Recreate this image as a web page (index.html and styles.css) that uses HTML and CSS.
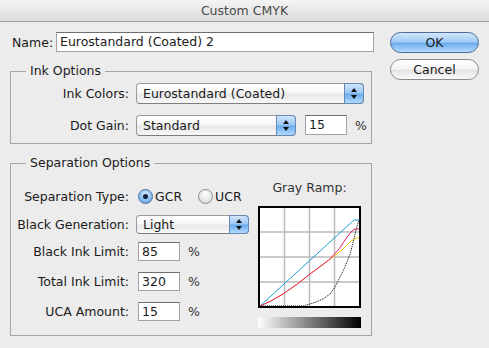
FILE: index.html
```html
<!DOCTYPE html>
<html lang="en">
<head>
<meta charset="utf-8">
<title>Custom CMYK</title>
<link rel="stylesheet" href="styles.css">
</head>
<body>
<div class="win">
  <div class="titlebar">Custom CMYK</div>
  <div class="content">
    <div class="main">
      <div class="name-row">
        <span class="name-lbl">Name:</span>
        <div class="field name-field">Eurostandard (Coated) 2</div>
      </div>

      <fieldset class="group ink">
        <legend>Ink Options</legend>
        <div class="row">
          <span class="lbl">Ink Colors:</span>
          <div class="popup popup-wide">Eurostandard (Coated)<span class="stepper"></span></div>
        </div>
        <div class="row">
          <span class="lbl">Dot Gain:</span>
          <div class="popup popup-mid">Standard<span class="stepper"></span></div>
          <div class="field num">15</div>
          <span class="pct">%</span>
        </div>
      </fieldset>

      <fieldset class="group sep">
        <legend>Separation Options</legend>
        <div class="sep-body">
          <div class="sep-rows">
            <div class="row">
              <span class="lbl">Separation Type:</span>
              <span class="radio on"></span><span class="radio-txt">GCR</span>
              <span class="radio"></span><span class="radio-txt">UCR</span>
            </div>
            <div class="row gen">
              <span class="lbl">Black Generation:</span>
              <div class="popup popup-short">Light<span class="stepper"></span></div>
            </div>
            <div class="row numrow">
              <span class="lbl">Black Ink Limit:</span>
              <div class="field num">85</div>
              <span class="pct">%</span>
            </div>
            <div class="row numrow">
              <span class="lbl">Total Ink Limit:</span>
              <div class="field num">320</div>
              <span class="pct">%</span>
            </div>
            <div class="row numrow">
              <span class="lbl">UCA Amount:</span>
              <div class="field num">15</div>
              <span class="pct">%</span>
            </div>
          </div>
          <div class="ramp">
            <div class="ramp-lbl">Gray Ramp:</div>
            <svg class="ramp-graph" width="103" height="102" viewBox="0 0 103 102">
              <rect x="0" y="0" width="103" height="102" fill="#fff"/>
              <g stroke="#b9b9b9" stroke-width="1.5">
                <line x1="26.5" y1="1" x2="26.5" y2="101"/>
                <line x1="51.5" y1="1" x2="51.5" y2="101"/>
                <line x1="76.5" y1="1" x2="76.5" y2="101"/>
                <line x1="1" y1="26" x2="102" y2="26"/>
                <line x1="1" y1="51" x2="102" y2="51"/>
                <line x1="1" y1="76" x2="102" y2="76"/>
              </g>
              <g fill="none" stroke-width="1">
                <polyline stroke="#1b9fd8" points="2,100 96,14 101,14"/>
                <polyline stroke="#f2c200" points="2,100 13,95 25,88 38,79 52,68 64,59 75,51 84,44 92,36 96,33 98,32 101,32"/>
                <polyline stroke="#e81c6e" points="2,100 13,95 25,88 38,79 52,68 63,60 72,53 81,43 89,31 94,25 97,23 101,23"/>
                <polyline stroke="#000" stroke-dasharray="1 1" points="1,100 45,100 52,98 58,96 65,93 72,88 77,81 82,71 87,61 92,48 95,37 98,24 101,14"/>
              </g>
              <rect x="1" y="1" width="101" height="100" fill="none" stroke="#000" stroke-width="2"/>
            </svg>
            <div class="ramp-bar"></div>
          </div>
        </div>
      </fieldset>
    </div>

    <div class="buttons">
      <div class="btn btn-default">OK</div>
      <div class="btn">Cancel</div>
    </div>
  </div>
</div>
</body>
</html>
```

FILE: styles.css
```css
*{box-sizing:border-box;}
html,body{margin:0;padding:0;}
body{
  font-family:'DejaVu Sans',sans-serif;
  font-size:12.5px;
  color:#1a1a1a;
  background:#ececec;
}
.win{width:489px;height:348px;background:#ececec;overflow:hidden;}

.titlebar{
  height:22px; line-height:21px; text-align:center;
  font-size:12.5px; color:#4a4a4a;
  background:linear-gradient(#f4f4f4,#dcdcdc);
  border-bottom:1px solid #9e9e9e;
}

.content{display:flex; gap:16px; padding:10px 0 0 10px;}
.main{width:364px;}

/* ---- name ---- */
.name-row{display:flex; align-items:center; height:20px; padding-left:2px;}
.name-lbl{width:44px;}
.field{
  background:#fff; height:20px; line-height:18px; padding-left:3px;
  border:1px solid #a2a2a2; border-top-color:#6e6e6e;
}
.name-field{width:318px;}

/* ---- groups ---- */
.group{
  width:362px; margin:11px 0 0; padding:3px 0 7px;
  border:1px solid #a5a5a5;
}
.group legend{margin-left:15px; padding:0 4px; line-height:16px;}
.row{display:flex; align-items:center; height:22px; margin-top:10px;}
.row:first-of-type{margin-top:0;}
.lbl{width:118px; text-align:right; margin-right:7px; flex-shrink:0;}

/* popup button */
.popup{
  position:relative; height:21px; line-height:19px; padding-left:6px;
  border:1px solid #9a9a9a; border-bottom-color:#7e7e7e; border-radius:4px;
  background:linear-gradient(#ffffff,#f6f6f6 45%,#e8e8e8 55%,#f8f8f8);
}
.popup-wide{width:228px;}
.popup-mid{width:160px;}
.popup-short{width:113px; height:19px; line-height:17px;}
.stepper{
  position:absolute; top:-1px; right:-1px; bottom:-1px; width:20px;
  border:1px solid #6689b6; border-radius:0 4px 4px 0;
  background:linear-gradient(#d0e5fb,#9ac8f5 48%,#69a9ee 52%,#b2dafd);
}
.stepper::before,.stepper::after{
  content:""; position:absolute; left:6px;
  border-left:3.5px solid transparent; border-right:3.5px solid transparent;
}
.stepper::before{top:4px; border-bottom:4px solid #111;}
.popup-short .stepper::before{top:3px;}
.stepper::after{bottom:4px; border-top:4px solid #111;}
.popup-short .stepper::after{bottom:3px;}

.num{width:42px;}
.popup + .num{margin-left:9px;}
.pct{margin-left:8px; color:#333;}

/* separation */
.sep{padding:10px 0 7px;}
.sep-body{display:flex;}
.sep-rows{width:247px; padding-top:5px;}
.sep .row{height:20px;}
.sep .row.gen{margin-top:8px;}
.sep .row.numrow{margin-top:10px;}
.sep .row.gen + .numrow{margin-top:7px;}
.sep .num{height:19px; margin-left:2px;}

.radio{
  width:15px; height:15px; border-radius:50%; flex-shrink:0;
  border:1px solid #8a8a8a;
  background:radial-gradient(circle at 50% 30%,#ffffff,#e6e6e6 60%,#d0d0d0);
  margin:0 2px 0 2px; position:relative;
}
.radio.on{
  border-color:#4a6f9e;
  background:radial-gradient(circle at 50% 35%,#d8ecff,#8cc0f2 55%,#4f95e0);
}
.radio.on::after{
  content:""; position:absolute; left:4px; top:4px; width:5px; height:5px;
  border-radius:50%; background:#10203a;
}
.radio-txt{margin-right:14px;}

.ramp{display:flex; flex-direction:column; align-items:center; width:103px;}
.ramp-lbl{line-height:14px; margin-bottom:11px; color:#333;}
.ramp-graph{display:block;}
.ramp-bar{
  width:103px; height:11px; margin-top:9px;
  background:linear-gradient(to right,#ffffff,#000000);
}

/* buttons */
.buttons{display:flex; flex-direction:column; gap:6px; width:89px;}
.btn{
  height:21px; line-height:19px; text-align:center; border-radius:11px;
  border:1px solid #8a8a8a; font-size:12.5px;
  background:linear-gradient(#ffffff,#f4f4f4 45%,#e4e4e4 55%,#fafafa);
}
.btn-default{
  border-color:#4c6d9a;
  background:linear-gradient(#d3e6fb,#a1cbf5 45%,#6eadee 55%,#b4dcfd);
}
```
